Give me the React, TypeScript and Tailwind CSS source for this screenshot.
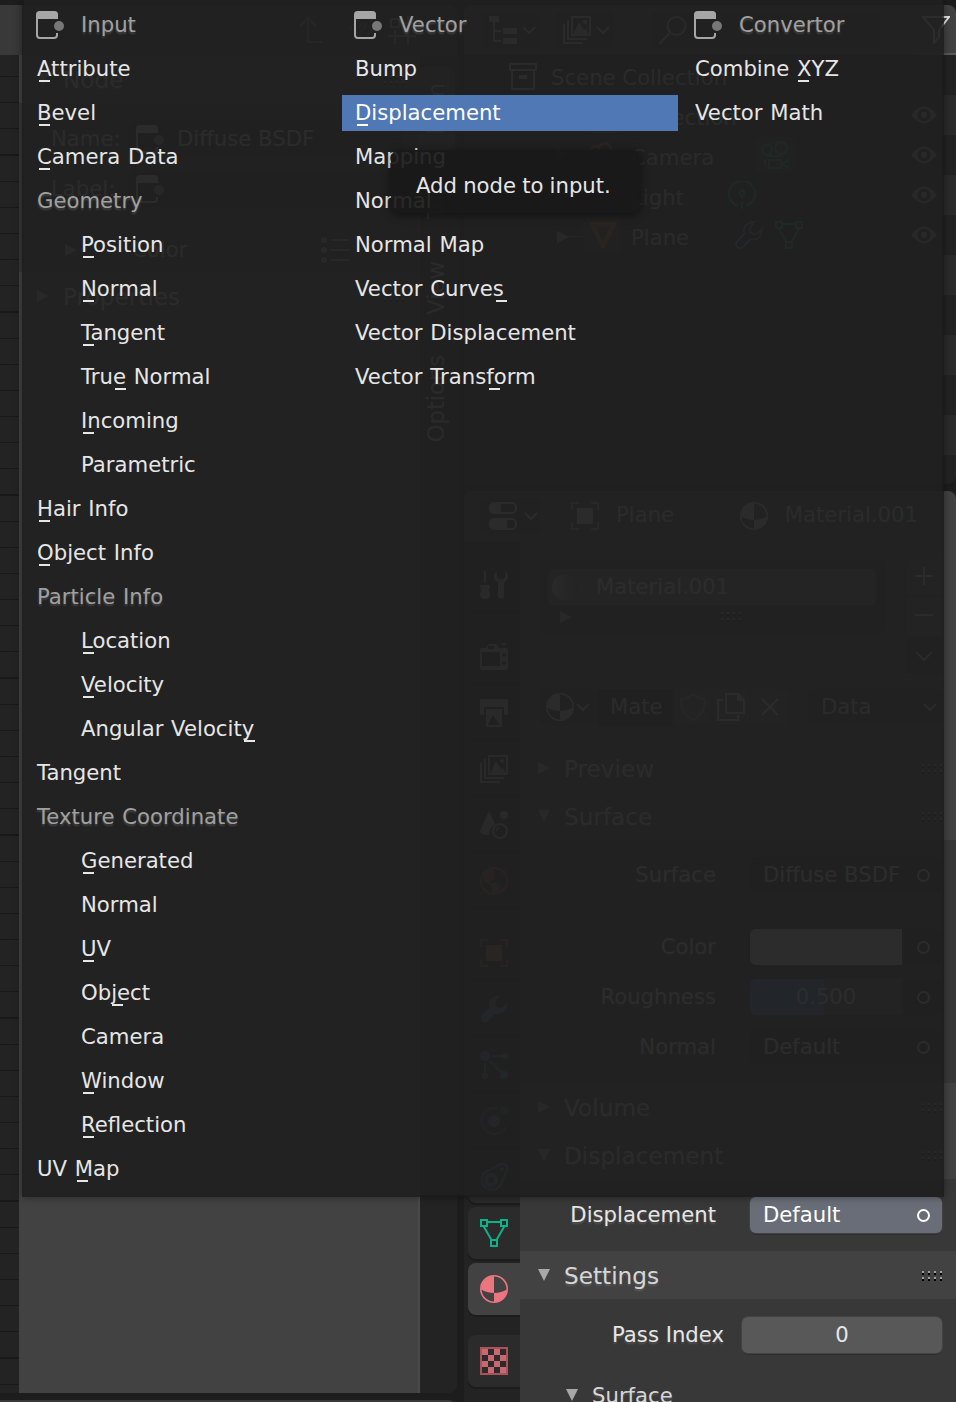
import React from "react";

type Item = { label: string; mark?: number; kind?: "sub" | "group" | "active" };

/* mark: x offset of the accelerator underline, from the start of the label */
const inputItems: Item[] = [
  { label: "Attribute", mark: 2 },
  { label: "Bevel", mark: 2 },
  { label: "Camera Data", mark: 2 },
  { label: "Geometry", kind: "group" },
  { label: "Position", mark: 2, kind: "sub" },
  { label: "Normal", mark: 2, kind: "sub" },
  { label: "Tangent", mark: 2, kind: "sub" },
  { label: "True Normal", mark: 34, kind: "sub" },
  { label: "Incoming", mark: 2, kind: "sub" },
  { label: "Parametric", kind: "sub" },
  { label: "Hair Info", mark: 2 },
  { label: "Object Info", mark: 2 },
  { label: "Particle Info", kind: "group" },
  { label: "Location", mark: 2, kind: "sub" },
  { label: "Velocity", mark: 2, kind: "sub" },
  { label: "Angular Velocity", mark: 163, kind: "sub" },
  { label: "Tangent" },
  { label: "Texture Coordinate", kind: "group" },
  { label: "Generated", mark: 2, kind: "sub" },
  { label: "Normal", kind: "sub" },
  { label: "UV", mark: 2, kind: "sub" },
  { label: "Object", mark: 31, kind: "sub" },
  { label: "Camera", kind: "sub" },
  { label: "Window", mark: 2, kind: "sub" },
  { label: "Reflection", mark: 2, kind: "sub" },
  { label: "UV Map", mark: 40 },
];

const vectorItems: Item[] = [
  { label: "Bump" },
  { label: "Displacement", mark: 2, kind: "active" },
  { label: "Mapping" },
  { label: "Normal" },
  { label: "Normal Map" },
  { label: "Vector Curves", mark: 141 },
  { label: "Vector Displacement" },
  { label: "Vector Transform", mark: 134 },
];

const convertorItems: Item[] = [
  { label: "Combine XYZ", mark: 103 },
  { label: "Vector Math" },
];

/* ---------- icons (28px grid) ---------- */

function Svg({ children, className = "" }: { children: React.ReactNode; className?: string }) {
  return (
    <svg viewBox="0 0 28 28" fill="none" className={"h-7 w-7 shrink-0 " + className}>
      {children}
    </svg>
  );
}

const NodeIcon = ({ className = "" }: { className?: string }) => (
  <Svg className={className}>
    <path d="M0 8V3.5Q0 0 3.5 0H18.5Q22 0 22 3.5V8Z" fill="currentColor" />
    <path d="M1 7V24Q1 27 4 27H18Q21 27 21 24V22" stroke="currentColor" strokeWidth="2" />
    <circle cx="23" cy="15" r="5" fill="currentColor" fillOpacity="0.65" />
  </Svg>
);

const Chevron = ({ className = "" }: { className?: string }) => (
  <svg viewBox="0 0 14 8" fill="none" className={"h-2 w-[14px] shrink-0 " + className}>
    <path d="M1 1l6 6 6-6" stroke="currentColor" strokeWidth="2" />
  </svg>
);

const Tri = ({ open = false, className = "" }: { open?: boolean; className?: string }) => (
  <svg viewBox="0 0 12 12" className={"h-3 w-3 shrink-0 fill-[#a8a8a8] " + className}>
    <path d={open ? "M0 0H12L6 12Z" : "M0 0L12 6L0 12Z"} />
  </svg>
);

const Dots = ({ className = "" }: { className?: string }) => (
  <svg viewBox="0 0 22 10" shapeRendering="crispEdges" className={"h-[10px] w-[22px] shrink-0 " + className}>
    {[0, 6, 12, 18].map((x) => (
      <g key={x}>
        <path d={`M${x} 0h2v2h-2zM${x} 6h2v2h-2z`} fill="#a0a0a0" />
        <path d={`M${x} 2h2v2h-2zM${x} 8h2v2h-2z`} fill="#000" />
      </g>
    ))}
  </svg>
);

const MaterialIcon = ({ className = "" }: { className?: string }) => (
  <Svg className={className}>
    <circle cx="14" cy="14" r="13.2" stroke="currentColor" strokeWidth="1.6" />
    <path d="M14 1V18Q6.5 18 1.3 14.6A13 13 0 0 1 14 1Z" fill="currentColor" />
    <path d="M14 18Q21.5 18 26.7 14.6A13 13 0 0 1 14 27Z" fill="currentColor" />
  </Svg>
);

const MeshIcon = ({ className = "" }: { className?: string }) => (
  <Svg className={className}>
    <g stroke="currentColor" strokeWidth="2">
      <path d="M1 1h6v6H1zM21 1h6v6h-6zM11 21h6v6h-6zM7 3h14M3.5 7L11.5 21M24.5 7L16.5 21" />
    </g>
  </Svg>
);

const TextureIcon = ({ className = "" }: { className?: string }) => (
  <svg viewBox="0 0 28 28" fill="none" shapeRendering="crispEdges" className={"h-7 w-7 " + className}>
    <path d="M1 1h26v26H1z" stroke="#a8525a" strokeWidth="2" />
    {[0, 1, 2, 3].map((r) =>
      [0, 1].map((c) => (
        <rect key={`${r}-${c}`} x={2 + c * 12 + (r % 2) * 6} y={2 + r * 6} width="6" height="6" fill="#c96870" />
      ))
    )}
  </svg>
);

const LayersIcon = ({ className = "" }: { className?: string }) => (
  <Svg className={className}>
    <path d="M9 1h18v18H9zM5 4v19h19M1 8v19h19" stroke="currentColor" strokeWidth="2" />
    <path d="M10 19l6-13 5 8 2-1 3 6z" fill="currentColor" />
    <circle cx="22" cy="6" r="2" fill="currentColor" />
  </Svg>
);

const WrenchIcon = ({ className = "", filled = true }: { className?: string; filled?: boolean }) => (
  <Svg className={className}>
    <path
      d="M19 1Q11 1 9 8Q9 11 9.5 13L1.8 20.5Q0 23 2 26Q5 28 7.500 26.200L15 18.500Q26 20 27 8L22 13Q18 14 15 11Q14 7 19 1Z"
      fill={filled ? "currentColor" : "none"}
      stroke="currentColor"
      strokeWidth={filled ? 0.5 : 1.8}
    />
  </Svg>
);

const ObjectIcon = ({ className = "" }: { className?: string }) => (
  <Svg className={className}>
    <path d="M1 8V1h7M20 1h7v7M27 20v7h-7M8 27H1v-7" stroke="currentColor" strokeWidth="2" strokeOpacity="0.7" />
    <rect x="6" y="6" width="16" height="16" fill="currentColor" />
  </Svg>
);

const ToolIcon = () => (
  <Svg>
    <path d="M5 0v12" stroke="currentColor" strokeWidth="2" />
    <path d="M0 14h10v3q-2 1-1 3q3 8-4 8t-4-8q1-2-1-3z" fill="currentColor" />
    <path d="M17 0q-4 3-3 7 1 3 4 4v15q3 4 6 0V11q6-4 3-9l-2-2v6q-4 5-8 0z" fill="currentColor" />
  </Svg>
);

const RenderIcon = () => (
  <Svg>
    <path d="M2 5h4l3-4h7l3 4h7q2 0 2 2v18q0 2-2 2H2q-2 0-2-2V7q0-2 2-2zM2 9v14h18V9z" fill="currentColor" fillRule="evenodd" />
    <path d="M22 1h4" stroke="currentColor" strokeWidth="2" />
    <circle cx="24" cy="12" r="2" fill="#2b2b2b" />
    <circle cx="24" cy="20" r="2" fill="#2b2b2b" />
    <path d="M8 3h6v3H8z" fill="#2b2b2b" />
  </Svg>
);

const OutputIcon = () => (
  <Svg>
    <path d="M2 0h24q2 0 2 2v12q0 2-2 2h-2V8H4v8H2q-2 0-2-2V2q0-2 2-2z" fill="currentColor" />
    <path d="M6 10h16v18H6zM8 26h12l-7-10z" fill="currentColor" fillRule="evenodd" />
  </Svg>
);

const SceneIcon = () => (
  <Svg>
    <path d="M9 0L0 20q0 4 9 4 0-7 6-11z" fill="currentColor" />
    <circle cx="24" cy="4" r="4" fill="currentColor" />
    <circle cx="20" cy="20" r="7" stroke="currentColor" strokeWidth="2" />
    <path d="M16.500 20q0-3 3-3.500" stroke="currentColor" strokeWidth="1.500" />
  </Svg>
);

const WorldIcon = () => (
  <Svg>
    <circle cx="14" cy="14" r="13" stroke="currentColor" strokeWidth="2" />
    <path d="M4 6l7-4 4 4-2 3 2 2-5 3-1 3-5-4zM11 17l4-1 5 3-2 5-5 1zM0 28l4-4M24 4l4-4" fill="currentColor" stroke="currentColor" />
  </Svg>
);

const ParticlesIcon = () => (
  <Svg>
    <path d="M12 5h14M5 12v13M10 10l14 14" stroke="currentColor" strokeWidth="2" />
    <g fill="currentColor">
      <circle cx="5" cy="5" r="5" />
      <circle cx="25" cy="5" r="3" />
      <circle cx="5" cy="25" r="3" />
      <circle cx="24" cy="24" r="4" />
    </g>
  </Svg>
);

const PhysicsIcon = () => (
  <Svg>
    <path d="M18 1.500A13 13 0 1 0 26 20" stroke="currentColor" strokeWidth="2" strokeOpacity="0.6" />
    <circle cx="14" cy="14" r="6" fill="currentColor" />
    <circle cx="24" cy="4" r="4" fill="currentColor" fillOpacity="0.6" />
  </Svg>
);

const ConstraintIcon = () => (
  <Svg>
    <path d="M4 10L20 1.500Q28 0 27 7L20 23A10 10 0 1 1 4 10Z" stroke="currentColor" strokeWidth="2" />
    <circle cx="11" cy="17" r="5" stroke="currentColor" strokeWidth="4" />
    <circle cx="22" cy="6" r="2" fill="currentColor" />
  </Svg>
);

const EyeIcon = () => (
  <Svg>
    <path d="M1 14Q14-3 27 14Q14 31 1 14Z" fill="#a0a0a0" />
    <circle cx="14" cy="14" r="6.500" fill="#2a2a2a" />
    <circle cx="14" cy="14" r="3.200" fill="#a0a0a0" />
  </Svg>
);

/* ---------- background editors ---------- */

function PanelHeader({ title, open = false }: { title: string; open?: boolean }) {
  return (
    <div className="flex h-12 shrink-0 items-center bg-[#424242] pl-[18px] pr-3">
      <Tri open={open} />
      <span className="ml-[14px] mt-[2px] flex-1 text-[23.200px] text-[#d6d6d6] [text-shadow:0_2px_2px_rgba(150,150,150,0.3)]">{title}</span>
      <Dots className="mt-[2px]" />
    </div>
  );
}

const Socket = ({ className = "border-[#d9d9d9]" }: { className?: string }) => (
  <span className={"h-[13px] w-[13px] shrink-0 rounded-full border-2 " + className} />
);

function PropRow({ label, children }: { label: string; children: React.ReactNode }) {
  return (
    <div className="flex h-9 shrink-0 items-center">
      <span className="-mt-px w-[196px] text-right text-[#e6e6e6] [text-shadow:0_2px_2px_rgba(150,150,150,0.3)]">{label}</span>
      <div className="ml-[34px] flex h-9 w-48 items-center">{children}</div>
    </div>
  );
}

function NodeField({ text }: { text: string }) {
  return (
    <div className="flex h-9 w-full items-center rounded-md bg-[#2e2e2e] pl-[13px] pr-3 text-[#e6e6e6]">
      <span className="-mt-px flex-1">{text}</span>
      <Socket />
    </div>
  );
}

function NodeEditor() {
  return (
    <div className="flex w-[457px] shrink-0 flex-col">
      <div className="mt-[5px] flex h-[50px] shrink-0 items-center rounded-tr-lg bg-[#393939] text-[#a8a8a8]">
        <div className="ml-[290px] flex h-9 w-9 items-center justify-center rounded-md bg-[#3e3e3e] text-[#808080]">
          <Svg>
            <path d="M6 10l8-8 8 8M14 2v22q0 2 2 2h12" stroke="currentColor" strokeWidth="2" />
          </Svg>
        </div>
        <div className="ml-[14px] flex h-9 w-[116px] items-center gap-3 rounded-md bg-[#333] pl-2">
          <Svg className="text-[#606060]">
            <path d="M2 12L12 2q14-2 14 10L16 24l-6-6 8-8-3-3-8 8z" stroke="currentColor" strokeWidth="2" />
          </Svg>
          <Svg>
            <path d="M3 3h8v8H3zM20 0v28M0 20h28M7 14v14M14 7h14" stroke="currentColor" strokeWidth="2" />
          </Svg>
        </div>
      </div>
      <div className="flex h-[1338px] shrink-0 overflow-hidden rounded-br-lg bg-[#232323]">
        <div className="w-[19px] shrink-0 bg-[repeating-linear-gradient(to_bottom,#232323_0px,#232323_25px,#191919_25px,#191919_26.150px)] bg-[position:0_-4px]" />
        <div className="flex w-[401px] shrink-0 flex-col border-r-2 border-[#4a4a4a] bg-[#424242]">
          <PanelHeader title="Node" open />
          <div className="flex h-[169px] shrink-0 flex-col bg-[#383838] pl-8 pr-4 pt-[18px] text-[#d6d6d6]">
            <div className="flex h-9 items-center">
              <span className="-mt-px w-[77px]">Name:</span>
              <div className="flex h-9 flex-1 items-center gap-[13px] rounded-md bg-[#2e2e2e] pl-2">
                <NodeIcon />
                <span className="-mt-px">Diffuse BSDF</span>
              </div>
            </div>
            <div className="mt-[14px] flex h-9 items-center">
              <span className="-mt-px w-[77px]">Label:</span>
              <div className="flex h-9 flex-1 items-center rounded-md bg-[#2e2e2e] pl-2">
                <NodeIcon />
              </div>
            </div>
            <div className="mt-[25px] flex h-9 items-center pl-[14px]">
              <Tri />
              <span className="ml-[19px] h-6 w-[22px] rounded bg-[#303030]" />
              <span className="ml-[14px] flex-1">Color</span>
              <svg viewBox="0 0 28 26" className="mr-[53px] h-[26px] w-7">
                {[3, 13, 23].map((y) => (
                  <g key={y} fill="#a8a8a8">
                    <circle cx="3" cy={y} r="3" />
                    <rect x="10" y={y - 1} width="18" height="2" />
                  </g>
                ))}
              </svg>
            </div>
          </div>
          <PanelHeader title="Properties" />
        </div>
        <div className="flex w-[35px] flex-col gap-[6px] pt-3 text-[22.600px] text-[#c8c8c8]">
          {[
            { name: "Item", box: "h-[83px] bg-[#424242]" },
            { name: "Tool", box: "h-[82px] bg-[#2b2b2b]" },
            { name: "View", box: "h-[88px] bg-[#2b2b2b]" },
            { name: "Options", box: "h-[122px] bg-[#2b2b2b]" },
          ].map((t) => (
            <div key={t.name} className={"flex w-[35px] shrink-0 items-center justify-center rounded-r-lg pr-[3px] " + t.box}>
              <span className="rotate-180 [writing-mode:vertical-rl]">{t.name}</span>
            </div>
          ))}
        </div>
      </div>
      <div className="mt-[7px] h-8 w-[456px] shrink-0 rounded-tr-lg bg-[#393939]" />
    </div>
  );
}

function Outliner() {
  return (
    <div className="flex h-[479px] shrink-0 flex-col overflow-hidden rounded-lg bg-[#232323] text-[#c8c8c8]">
      <div className="flex h-[50px] shrink-0 items-center bg-[#424242]">
        <div className="ml-[17px] flex h-9 w-[59px] items-center gap-[5px] rounded-md bg-[#303030] pl-2">
          <Svg>
            <path d="M0 0h10v6H0zM14 12h14v6H14zM14 22h14v6H14z" fill="currentColor" />
            <path d="M5 6v19h7M5 15h7" stroke="currentColor" strokeWidth="2" />
          </Svg>
          <Chevron />
        </div>
        <div className="ml-[15px] flex h-9 w-[59px] items-center gap-[5px] rounded-md bg-[#303030] pl-2">
          <LayersIcon />
          <Chevron />
        </div>
        <div className="ml-[37px] flex h-9 w-[229px] items-center rounded-md bg-[#303030] pl-2">
          <Svg>
            <circle cx="17.500" cy="10" r="9" stroke="currentColor" strokeWidth="2" />
            <path d="M11 17L0 28" stroke="currentColor" strokeWidth="2" />
          </Svg>
        </div>
        <div className="ml-9 flex h-full w-[40px] items-center justify-center border-b-2 border-[#5a5a5a]">
          <Svg className="mt-[2px] text-[#e6e6e6]">
            <path d="M1 1H27L17 14V21L12 27V14Z" stroke="currentColor" strokeWidth="2" />
          </Svg>
        </div>
      </div>
      <div className="flex h-10 shrink-0 items-center pl-[45px]">
        <Svg className="mt-1">
          <path d="M1 1h26v6H1zM3 8v18h22V8" stroke="currentColor" strokeWidth="2" />
          <path d="M10 12h8v4h-8z" fill="currentColor" />
        </Svg>
        <span className="ml-[14px] mt-[6px]">Scene Collection</span>
      </div>
      <div className="flex h-10 shrink-0 items-center bg-[#2b2b2b] pl-[52px] pr-[18px]">
        <Tri open />
        <span className="ml-[26px] h-5 w-5 rounded bg-[#545454]" />
        <span className="ml-[10px] h-9 w-10 rounded-lg bg-[#393939]" />
        <span className="ml-2 mt-[6px] flex-1">Collection</span>
        <EyeIcon />
      </div>
      <div className="flex h-10 shrink-0 items-center pl-[93px] pr-[18px]">
        <Tri />
        <span className="flex h-9 w-[54px] items-center justify-end pr-[6px]">
          <Svg className="text-[#c06a30]">
            <path d="M3 12a4 4 0 1 1 7-5 6 6 0 1 1 8 7q-8 2-15-2zM8 18h12v9H8z" stroke="currentColor" strokeWidth="3" />
          </Svg>
        </span>
        <span className="ml-2 mt-[6px] w-[124px]">Camera</span>
        <span className="flex h-9 w-10 items-center justify-center rounded-lg bg-[#3c3c3c] text-[#00b88a]">
          <Svg>
            <circle cx="6" cy="9" r="5" stroke="currentColor" strokeWidth="2" />
            <circle cx="20" cy="7" r="6" stroke="currentColor" strokeWidth="2" />
            <path d="M6 15h16M8 19h12v8H8zM20 23l8-4v8zM4 19v6" stroke="currentColor" strokeWidth="2" />
          </Svg>
        </span>
        <span className="flex-1" />
        <EyeIcon />
      </div>
      <div className="flex h-10 shrink-0 items-center bg-[#2b2b2b] pl-[93px] pr-[18px]">
        <Tri />
        <span className="ml-[62px] mt-[6px] w-[97px]">Light</span>
        <Svg className="text-[#00b88a]">
          <path d="M10 25A13 13 0 1 1 18 25M14 14v4M14 21v7" stroke="currentColor" strokeWidth="2" />
          <circle cx="14" cy="12" r="2.500" stroke="currentColor" strokeWidth="2" />
        </Svg>
        <span className="flex-1" />
        <EyeIcon />
      </div>
      <div className="flex h-10 shrink-0 items-center pl-[93px] pr-[18px]">
        <Tri className="mt-[3px]" />
        <span className="mt-[3px] h-px w-[14px] bg-[#777]" />
        <span className="flex h-9 w-10 items-center justify-center rounded-lg bg-[#383838] text-[#c06a30]">
          <Svg>
            <path d="M3 3h22L14 25z" stroke="currentColor" strokeWidth="4.500" strokeLinejoin="round" />
          </Svg>
        </span>
        <span className="ml-2 mt-[6px] w-[104px]">Plane</span>
        <WrenchIcon filled={false} className="text-[#6f86b8]" />
        <MeshIcon className="ml-3 text-[#00b88a]" />
        <span className="flex-1" />
        <EyeIcon />
      </div>
      <div className="h-10 shrink-0 bg-[#2b2b2b]" />
      <div className="h-10 shrink-0" />
      <div className="h-10 shrink-0 bg-[#2b2b2b]" />
      <div className="h-10 shrink-0" />
      <div className="h-10 shrink-0 bg-[#2b2b2b]" />
      <div className="h-10 shrink-0" />
    </div>
  );
}

const tabs: { icon: React.ReactNode; cls: string }[] = [
  { icon: <ToolIcon />, cls: "mb-5 bg-[#2b2b2b] text-[#b8b8b8]" },
  { icon: <RenderIcon />, cls: "mb-1 bg-[#2b2b2b] text-[#b8b8b8]" },
  { icon: <OutputIcon />, cls: "mb-1 bg-[#2b2b2b] text-[#b8b8b8]" },
  { icon: <LayersIcon />, cls: "mb-1 bg-[#2b2b2b] text-[#b8b8b8]" },
  { icon: <SceneIcon />, cls: "mb-1 bg-[#2b2b2b] text-[#b8b8b8]" },
  { icon: <WorldIcon />, cls: "mb-5 bg-[#2b2b2b] text-[#a8504c]" },
  { icon: <ObjectIcon />, cls: "mb-1 bg-[#2b2b2b] text-[#b8764c]" },
  { icon: <WrenchIcon />, cls: "mb-1 bg-[#2b2b2b] text-[#5a8ab8]" },
  { icon: <ParticlesIcon />, cls: "mb-1 bg-[#2b2b2b] text-[#56809c]" },
  { icon: <PhysicsIcon />, cls: "mb-1 bg-[#2b2b2b] text-[#56809c]" },
  { icon: <ConstraintIcon />, cls: "mb-1 bg-[#2b2b2b] text-[#56809c]" },
  { icon: <MeshIcon />, cls: "mb-1 bg-[#2b2b2b] text-[#0bb28a]" },
  { icon: <MaterialIcon />, cls: "mb-5 bg-[#424242] text-[#eb7680]" },
  { icon: <TextureIcon />, cls: "bg-[#2b2b2b]" },
];

function Properties() {
  return (
    <div className="mt-[7px] flex h-[911px] shrink-0 flex-col overflow-hidden rounded-t-lg bg-[#424242]">
      <div className="flex h-[50px] shrink-0 items-center text-[#d6d6d6]">
        <div className="ml-4 flex h-9 w-[60px] items-center gap-[7px] rounded-md bg-[#303030] pl-[9px]">
          <Svg>
            <rect x="1" y="1" width="26" height="10" rx="4" stroke="currentColor" strokeWidth="2" />
            <rect x="1" y="17" width="26" height="10" rx="4" stroke="currentColor" strokeWidth="2" />
            <path d="M2 2h10v8H2zM2 18h16v8H2z" fill="currentColor" />
          </Svg>
          <Chevron />
        </div>
        <ObjectIcon className="ml-[31px]" />
        <span className="-mt-[2px] ml-[17px]">Plane</span>
        <span className="flex-1" />
        <MaterialIcon />
        <span className="-mt-[2px] ml-[17px] mr-[38px]">Material.001</span>
      </div>
      <div className="flex h-[861px] shrink-0">
        <div className="flex w-14 shrink-0 flex-col bg-[#232323] pl-1 pt-[18px]">
          {tabs.map((t, i) => (
            <div
              key={i}
              className={"flex h-[52px] w-[52px] shrink-0 items-center justify-center rounded-l-lg shadow-[0_2px_0_#1c1c1c] " + t.cls}
            >
              {t.icon}
            </div>
          ))}
        </div>
        <div className="flex w-[436px] shrink-0 flex-col bg-[#383838]">
          <div className="flex h-[203px] shrink-0 flex-col bg-[#424242] pl-5 pr-[14px] pt-[18px] text-[#d6d6d6]">
            <div className="flex h-[117px] items-start justify-between">
              <div className="flex h-[75px] w-[346px] flex-col rounded-md bg-[#323232] px-2 pt-[10px]">
                <div className="flex h-9 w-[328px] items-center rounded-md bg-[#6a6a6a] pl-1">
                  <span className="h-[26px] w-[26px] rounded-full bg-gradient-to-r from-[#c8c8c8] to-[#555]" />
                  <span className="-mt-px ml-[18px] text-[#e6e6e6]">Material.001</span>
                </div>
                <div className="mt-[6px] flex h-3 items-center pl-3">
                  <Tri />
                  <Dots className="ml-[149px]" />
                </div>
              </div>
              <div className="flex w-9 flex-col gap-[2px]">
                <div className="flex h-9 items-center justify-center rounded-t-md bg-[#545454]">
                  <Svg>
                    <path d="M5 13h18M14 4v18" stroke="currentColor" strokeWidth="2" />
                  </Svg>
                </div>
                <div className="flex h-[38px] items-center justify-center bg-[#545454]">
                  <Svg>
                    <path d="M5 13h18" stroke="currentColor" strokeWidth="2" />
                  </Svg>
                </div>
                <div className="flex h-[38px] items-center justify-center rounded-b-md bg-[#303030]">
                  <svg viewBox="0 0 18 10" fill="none" className="h-[10px] w-[18px]">
                    <path d="M1 1l8 8 8-8" stroke="currentColor" strokeWidth="2" />
                  </svg>
                </div>
              </div>
            </div>
            <div className="mt-[13px] flex h-9 gap-[2px]">
              <div className="flex w-[55px] items-center gap-[2px] rounded-l-md bg-[#303030] pl-[6px]">
                <MaterialIcon />
                <Chevron />
              </div>
              <div className="flex w-[75px] items-center bg-[#262626] pb-px pl-[13px]">Mate</div>
              <div className="flex w-[37px] items-center justify-center bg-[#545454]">
                <Svg>
                  <path d="M14 1q6 5 12 5 1 15-12 21Q1 21 2 6q6 0 12-5z" stroke="#8a8a8a" strokeWidth="2" />
                </Svg>
              </div>
              <div className="flex w-9 items-center justify-center bg-[#545454]">
                <Svg>
                  <path d="M6 7H1v20h20v-5M9 1h12l6 6v13H9z" stroke="currentColor" strokeWidth="2" />
                  <path d="M20 0l8 8h-8z" fill="currentColor" />
                </Svg>
              </div>
              <div className="flex w-[37px] items-center justify-center rounded-r-md bg-[#545454]">
                <Svg>
                  <path d="M6 6l16 16M22 6L6 22" stroke="currentColor" strokeWidth="2" />
                </Svg>
              </div>
              <div className="ml-[18px] flex w-[134px] items-center rounded-md bg-[#303030] pl-[13px] pr-[5px]">
                <span className="-mt-px flex-1">Data</span>
                <Chevron />
              </div>
            </div>
          </div>
          <PanelHeader title="Preview" />
          <PanelHeader title="Surface" open />
          <div className="flex h-[243px] shrink-0 flex-col pt-[17px]">
            <PropRow label="Surface">
              <NodeField text="Diffuse BSDF" />
            </PropRow>
            <div className="h-9" />
            <PropRow label="Color">
              <div className="h-9 w-[152px] rounded-l-md bg-[#e0e0e0]" />
              <div className="ml-[2px] flex h-9 flex-1 items-center justify-end rounded-r-md bg-[#2e2e2e] pr-3">
                <Socket />
              </div>
            </PropRow>
            <div className="h-[14px]" />
            <PropRow label="Roughness">
              <div className="flex h-9 w-[152px] items-center justify-center rounded-l-md bg-[linear-gradient(to_right,#4772b3_49%,#545454_49%)] pb-px text-[#e6e6e6]">
                0.500
              </div>
              <div className="ml-[2px] flex h-9 flex-1 items-center justify-end rounded-r-md bg-[#2e2e2e] pr-3">
                <Socket />
              </div>
            </PropRow>
            <div className="h-[14px]" />
            <PropRow label="Normal">
              <NodeField text="Default" />
            </PropRow>
          </div>
          <PanelHeader title="Volume" />
          <PanelHeader title="Displacement" open />
          <div className="h-[72px] shrink-0 pt-[18px]">
            <PropRow label="Displacement">
              <div className="flex h-9 w-full items-center rounded-md bg-[#696d77] pl-[13px] pr-3 text-white shadow-[0_0_0_1px_#424242,0_2px_0_#2e2e2e]">
                <span className="-mt-px flex-1">Default</span>
                <Socket className="border-white" />
              </div>
            </PropRow>
          </div>
          <PanelHeader title="Settings" open />
          <div className="flex h-[72px] shrink-0 items-center text-[#e6e6e6]">
            <span className="-mt-px w-[204px] text-right [text-shadow:0_2px_2px_rgba(150,150,150,0.3)]">Pass Index</span>
            <div className="ml-[18px] flex h-9 w-[200px] items-center justify-center rounded-md bg-[#585858] pb-px shadow-[0_0_0_1px_#424242,0_2px_0_#2e2e2e]">
              0
            </div>
          </div>
          <div className="flex h-12 shrink-0 items-center pl-[46px]">
            <Tri open />
            <span className="ml-[14px] mt-[2px] text-[#d6d6d6] [text-shadow:0_2px_2px_rgba(150,150,150,0.3)]">Surface</span>
          </div>
        </div>
      </div>
    </div>
  );
}

/* ---------- add-node menu ---------- */

function MenuRow({ item }: { item: Item }) {
  const kind = item.kind;
  const cls =
    kind === "sub"
      ? "pl-[57px] text-[#e6e6e6]"
      : kind === "group"
        ? "pl-[13px] text-[#a0a0a0] [text-shadow:0_2px_2px_rgba(150,150,150,0.3)]"
        : kind === "active"
          ? "pl-[13px] bg-[#5078b5] text-white"
          : "pl-[13px] text-[#e6e6e6]";
  return (
    <div className={"flex h-9 whitespace-nowrap leading-[35px] [word-spacing:1px] " + cls}>
      <span className="relative">
        {item.label}
        {item.mark !== undefined && (
          <span className="absolute top-[29px] h-[1.500px] w-[11px] bg-current" style={{ left: item.mark }} />
        )}
      </span>
    </div>
  );
}

function MenuColumn({ title, items, width }: { title: string; items: Item[]; width: string }) {
  return (
    <div className={"flex shrink-0 flex-col gap-2 " + width}>
      <div className="flex h-9 items-center pl-3 text-[#a0a0a0]">
        <NodeIcon className="text-[#a6a6a6]" />
        <span className="-mt-px ml-[17px] [text-shadow:0_2px_2px_rgba(150,150,150,0.3)]">{title}</span>
      </div>
      {items.map((it, i) => (
        <MenuRow key={i} item={it} />
      ))}
    </div>
  );
}

export default function App() {
  return (
    <div className="relative flex h-[1402px] w-[956px] overflow-hidden bg-[#1d1d1d] font-['DejaVu_Sans',sans-serif] text-[21.200px] leading-none">
      <NodeEditor />
      <div className="ml-[7px] flex w-[492px] shrink-0 flex-col pt-[5px]">
        <Outliner />
        <Properties />
      </div>

      <div className="absolute left-6 top-0 flex h-[1195px] w-[918px] bg-[#202020]/94 pt-[7px] shadow-[0_0_0_2px_rgba(28,28,28,0.75),0_0_8px_2px_rgba(0,0,0,0.4)]">
        <MenuColumn title="Input" items={inputItems} width="w-[318px]" />
        <MenuColumn title="Vector" items={vectorItems} width="w-[336px] mr-1" />
        <MenuColumn title="Convertor" items={convertorItems} width="w-[260px]" />
      </div>

      <div className="absolute left-[391px] top-[150px] flex h-[63px] w-[249px] items-center whitespace-nowrap rounded-lg bg-[#191919]/92 pl-[25px] pt-[9px] text-[#e6e6e6] shadow-[0_2px_8px_1px_rgba(0,0,0,0.4)] [word-spacing:-0.600px]">
        Add node to input.
      </div>
    </div>
  );
}
